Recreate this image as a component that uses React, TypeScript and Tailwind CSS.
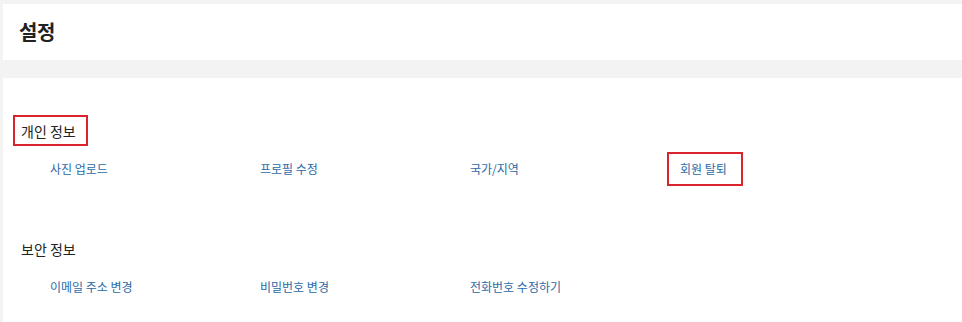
const sections = [
  {
    title: "개인 정보",
    marked: true,
    links: [
      { label: "사진 업로드" },
      { label: "프로필 수정" },
      { label: "국가/지역" },
      { label: "회원 탈퇴", marked: true },
    ],
  },
  {
    title: "보안 정보",
    marked: false,
    links: [
      { label: "이메일 주소 변경" },
      { label: "비밀번호 변경" },
      { label: "전화번호 수정하기" },
    ],
  },
];

const App = () => {
  return (
    <div
      className="w-[962px] h-[322px] overflow-hidden bg-[#f3f3f3] pl-[3px] pt-[4px]"
      style={{ fontFamily: '"Noto Sans CJK KR", "Noto Sans", sans-serif' }}
    >
      {/* page header */}
      <header className="h-[56px] bg-white flex items-center pl-[16px]">
        <h1 className="text-[20px] font-bold text-[#222] tracking-[-0.3px]">설정</h1>
      </header>

      <main className="mt-[18px] h-[300px] bg-white pt-[37px] pl-[10px] flex flex-col gap-[47px]">
        {sections.map((sec) => (
          <section key={sec.title} className="flex flex-col gap-[6px]">
            <div
              className={`self-start h-[31px] pl-[6px] pr-[10px] flex items-center border-2 ${
                sec.marked ? "border-[#d9232d]" : "border-transparent"
              }`}
            >
              <h2 className="text-[14px] text-[#222] leading-none">{sec.title}</h2>
            </div>
            <ul className="flex pl-[24px]">
              {sec.links.map((link) => (
                <li key={link.label} className="w-[210px]">
                  <a
                    href="#"
                    className={`inline-flex items-center h-[34px] pl-[11px] pr-[14px] border-2 text-[12px] text-[#2c6aa6] ${
                      link.marked ? "border-[#d9232d]" : "border-transparent"
                    }`}
                  >
                    {link.label}
                  </a>
                </li>
              ))}
            </ul>
          </section>
        ))}
      </main>
    </div>
  );
};

export default App;
